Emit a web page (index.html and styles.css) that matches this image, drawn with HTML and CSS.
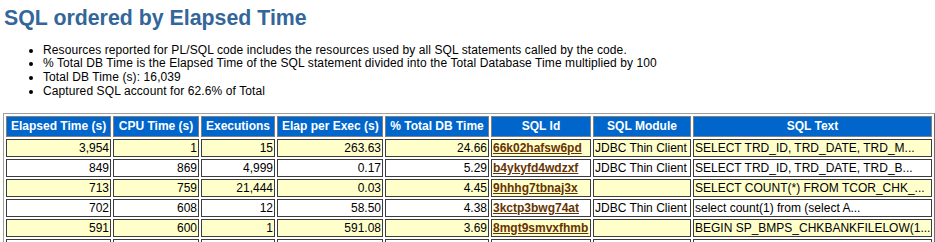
FILE: index.html
```html
<!DOCTYPE html>
<html>
<head>
<meta charset="utf-8">
<title>SQL ordered by Elapsed Time</title>
<link rel="stylesheet" href="styles.css">
</head>
<body class="awr">
<h3 class="awr">SQL ordered by Elapsed Time</h3>
<ul class="notes">
<li class="awr">Resources reported for PL/SQL code includes the resources used by all SQL statements called by the code.</li>
<li class="awr">% Total DB Time is the Elapsed Time of the SQL statement divided into the Total Database Time multiplied by 100</li>
<li class="awr">Total DB Time (s): 16,039</li>
<li class="awr">Captured SQL account for 62.6% of Total</li>
</ul>
<table class="tdiff">
<colgroup>
<col class="c1"><col class="c2"><col class="c3"><col class="c4"><col class="c5"><col class="c6"><col class="c7"><col class="c8">
</colgroup>
<tr>
<th class="awrbg">Elapsed Time (s)</th>
<th class="awrbg">CPU Time (s)</th>
<th class="awrbg">Executions</th>
<th class="awrbg">Elap per Exec (s)</th>
<th class="awrbg">% Total DB Time</th>
<th class="awrbg">SQL Id</th>
<th class="awrbg">SQL Module</th>
<th class="awrbg">SQL Text</th>
</tr>
<tr>
<td class="awrc num">3,954</td>
<td class="awrc num">1</td>
<td class="awrc num">15</td>
<td class="awrc num">263.63</td>
<td class="awrc num">24.66</td>
<td class="awrc"><a class="awr" href="#66k02hafsw6pd">66k02hafsw6pd</a></td>
<td class="awrc">JDBC Thin Client</td>
<td class="awrc">SELECT TRD_ID, TRD_DATE, TRD_M...</td>
</tr>
<tr>
<td class="awrnc num">849</td>
<td class="awrnc num">869</td>
<td class="awrnc num">4,999</td>
<td class="awrnc num">0.17</td>
<td class="awrnc num">5.29</td>
<td class="awrnc"><a class="awr" href="#b4ykyfd4wdzxf">b4ykyfd4wdzxf</a></td>
<td class="awrnc">JDBC Thin Client</td>
<td class="awrnc">SELECT TRD_ID, TRD_DATE, TRD_B...</td>
</tr>
<tr>
<td class="awrc num">713</td>
<td class="awrc num">759</td>
<td class="awrc num">21,444</td>
<td class="awrc num">0.03</td>
<td class="awrc num">4.45</td>
<td class="awrc"><a class="awr" href="#9hhhg7tbnaj3x">9hhhg7tbnaj3x</a></td>
<td class="awrc">&nbsp;</td>
<td class="awrc">SELECT COUNT(*) FROM TCOR_CHK_...</td>
</tr>
<tr>
<td class="awrnc num">702</td>
<td class="awrnc num">608</td>
<td class="awrnc num">12</td>
<td class="awrnc num">58.50</td>
<td class="awrnc num">4.38</td>
<td class="awrnc"><a class="awr" href="#3kctp3bwg74at">3kctp3bwg74at</a></td>
<td class="awrnc">JDBC Thin Client</td>
<td class="awrnc">select count(1) from (select A...</td>
</tr>
<tr>
<td class="awrc num">591</td>
<td class="awrc num">600</td>
<td class="awrc num">1</td>
<td class="awrc num">591.08</td>
<td class="awrc num">3.69</td>
<td class="awrc"><a class="awr" href="#8mgt9smvxfhmb">8mgt9smvxfhmb</a></td>
<td class="awrc">&nbsp;</td>
<td class="awrc">BEGIN SP_BMPS_CHKBANKFILELOW(1...</td>
</tr>
<tr>
<td class="awrnc">&nbsp;</td>
<td class="awrnc">&nbsp;</td>
<td class="awrnc">&nbsp;</td>
<td class="awrnc">&nbsp;</td>
<td class="awrnc">&nbsp;</td>
<td class="awrnc">&nbsp;</td>
<td class="awrnc">&nbsp;</td>
<td class="awrnc">&nbsp;</td>
</tr>
</table>
</body>
</html>
```
FILE: styles.css
```css
body.awr {
  margin: 0;
  padding: 0 0 0 3px;
  font: bold 12px "Liberation Sans", Arial, Helvetica, sans-serif;
  color: #000;
  background: #fff;
}

h3.awr {
  font: bold 21.33px "Liberation Sans", Arial, Helvetica, sans-serif;
  color: #336699;
  margin: 6px 0 0 1px;
  line-height: 24.5px;
}

ul.notes {
  margin: 13px 0 0 0;
  padding-left: 40px;
}

li.awr {
  font: 12px "Liberation Sans", Arial, Helvetica, sans-serif;
  color: #000;
  line-height: 13.8px;
  letter-spacing: 0.1px;
}

table.tdiff {
  margin-top: 14px;
  width: 932px;
  table-layout: fixed;
  border-collapse: separate;
  border-spacing: 2px;
  border: 1px solid #a0a0a0;
  border-right-color: #6a6a6a;
  border-bottom-color: #6a6a6a;
}

col.c1 { width: 105px; }
col.c2 { width: 86px; }
col.c3 { width: 74px; }
col.c4 { width: 106px; }
col.c5 { width: 104px; }
col.c6 { width: 100px; }
col.c7 { width: 98px; }
col.c8 { width: 239px; }

th.awrbg {
  box-sizing: border-box;
  font: bold 12px "Liberation Sans", Arial, Helvetica, sans-serif;
  line-height: 14px;
  color: #fff;
  background: #0066cc;
  padding: 2px 4px 3px;
  border: 1px solid #808080;
  text-align: center;
  white-space: nowrap;
  overflow: hidden;
}

td.awrc,
td.awrnc {
  box-sizing: border-box;
  font: 12px "Liberation Sans", Arial, Helvetica, sans-serif;
  line-height: 14px;
  color: #000;
  vertical-align: top;
  padding: 1px;
  border: 1px solid #3c3c3c;
  white-space: nowrap;
  overflow: hidden;
}

td.awrc { background: #ffffcc; }
td.awrnc { background: #fff; }

td.num { text-align: right; }

a.awr {
  font: bold 12px "Liberation Sans", Arial, Helvetica, sans-serif;
  color: #663300;
  text-decoration: underline;
}
```
